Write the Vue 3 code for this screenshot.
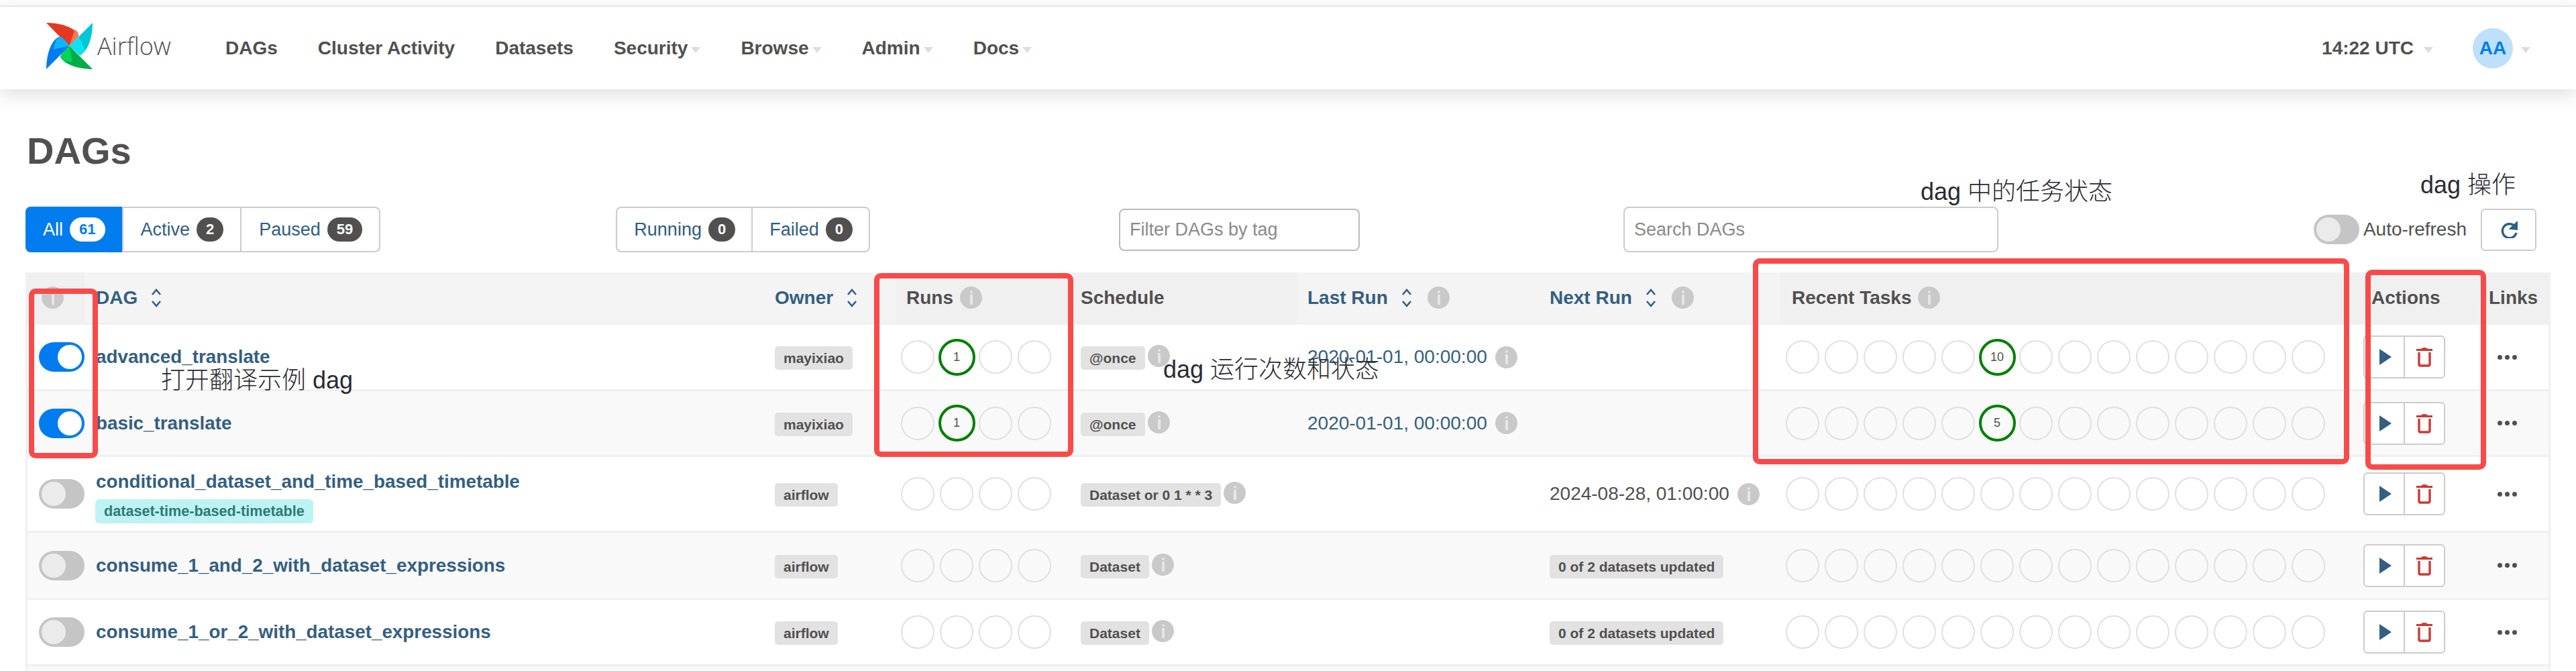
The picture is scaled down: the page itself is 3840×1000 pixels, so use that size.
<script setup>
const navItems = [
  { label: 'DAGs' },
  { label: 'Cluster Activity' },
  { label: 'Datasets' },
  { label: 'Security', caret: true },
  { label: 'Browse', caret: true },
  { label: 'Admin', caret: true },
  { label: 'Docs', caret: true }
]

const states = [
  { label: 'All', count: 61, active: true },
  { label: 'Active', count: 2 },
  { label: 'Paused', count: 59 }
]
const runStates = [
  { label: 'Running', count: 0 },
  { label: 'Failed', count: 0 }
]

const columns = [
  { key: 'toggle', info: true, dark: true },
  { key: 'dag', label: 'DAG', sort: true, link: true },
  { key: 'owner', label: 'Owner', sort: true, link: true },
  { key: 'runs', label: 'Runs', info: true, dark: true },
  { key: 'schedule', label: 'Schedule', dark: true },
  { key: 'last', label: 'Last Run', sort: true, info: true, link: true },
  { key: 'next', label: 'Next Run', sort: true, info: true, link: true },
  { key: 'tasks', label: 'Recent Tasks', info: true, dark: true },
  { key: 'actions', label: 'Actions', dark: true },
  { key: 'links', label: 'Links', dark: true }
]

const rows = [
  { name: 'advanced_translate', on: true, owner: 'mayixiao', run: 1, schedule: '@once', last: '2020-01-01, 00:00:00', taskIndex: 5, taskCount: 10, h: 99 },
  { name: 'basic_translate', on: true, owner: 'mayixiao', run: 1, schedule: '@once', last: '2020-01-01, 00:00:00', taskIndex: 5, taskCount: 5, h: 98 },
  { name: 'conditional_dataset_and_time_based_timetable', tag: 'dataset-time-based-timetable', owner: 'airflow', schedule: 'Dataset or 0 1 * * 3', next: '2024-08-28, 01:00:00', h: 113 },
  { name: 'consume_1_and_2_with_dataset_expressions', owner: 'airflow', schedule: 'Dataset', nextBadge: '0 of 2 datasets updated', h: 100 },
  { name: 'consume_1_or_2_with_dataset_expressions', owner: 'airflow', schedule: 'Dataset', nextBadge: '0 of 2 datasets updated', h: 99 },
  { h: 60 }
]
</script>

<template>
  <div class="page">
    <header class="navbar">
      <div class="brand">
        <svg class="logo" viewBox="0 0 72 72">
          <path d="M1 1C16 1 42 5 50 20L35 36Z" fill="#e43921" />
          <path d="M44 11C48 14 50 17 50 21L36 36Z" fill="#ff7557" />
          <path d="M71 1C71 16 67 42 52 50L36 36Z" fill="#00c7d4" />
          <path d="M50 21L36 36L52 51L60 43Z" fill="#11e1ee" />
          <path d="M71 71C56 71 30 67 22 52L36 36Z" fill="#00ad46" />
          <path d="M22 52C24 47 30 41 36 36L40 60C32 60 26 57 22 52Z" fill="#04d659" />
          <path d="M1 71C1 56 5 30 20 22L36 36Z" fill="#017cee" />
          <path d="M20 22C25 22 31 28 36 36L12 41C13 33 16 26 20 22Z" fill="#0cb6ff" />
        </svg>
        <span class="brand-name">Airflow</span>
      </div>
      <nav class="nav-links">
        <a v-for="item in navItems" :key="item.label" class="nav-link">
          {{ item.label }}<i v-if="item.caret" class="caret"></i>
        </a>
      </nav>
      <div class="nav-right">
        <span class="clock">14:22 UTC<i class="caret"></i></span>
        <span class="avatar">AA</span>
        <i class="caret"></i>
      </div>
    </header>

    <main class="content">
      <h1 class="title">DAGs</h1>

      <div class="toolbar">
        <div class="btn-group">
          <a v-for="s in states" :key="s.label" class="filter-btn" :class="{ active: s.active }">
            {{ s.label }}<span class="pill">{{ s.count }}</span>
          </a>
        </div>
        <div class="btn-group runs-group">
          <a v-for="s in runStates" :key="s.label" class="filter-btn">
            {{ s.label }}<span class="pill">{{ s.count }}</span>
          </a>
        </div>
        <input class="field tag-field" placeholder="Filter DAGs by tag" />
        <input class="field search-field" placeholder="Search DAGs" />
        <div class="refresh-box">
          <span class="switch"><i></i></span>
          <span class="refresh-label">Auto-refresh</span>
          <button class="refresh-btn">
            <svg viewBox="0 0 26 26" width="26" height="26">
              <path d="M21 7.5A10.5 10.5 0 1 0 24 18" fill="none" stroke="#2f5d84" stroke-width="3.4" />
              <path d="M26 0V14L12.5 12.5Z" fill="#2f5d84" />
            </svg>
          </button>
        </div>
      </div>

      <section class="dag-table">
        <div class="row head">
          <div v-for="c in columns" :key="c.key" class="cell" :class="[c.key, { dark: c.dark, link: c.link }]">
            <span class="head-label">{{ c.label }}</span>
            <svg v-if="c.sort" class="sort" viewBox="0 0 16 28" width="16" height="28">
              <path d="M2 9L8 2L14 9M2 19L8 26L14 19" fill="none" stroke="currentColor" stroke-width="2.6" />
            </svg>
            <span v-if="c.info" class="info"></span>
          </div>
        </div>

        <div v-for="(r, i) in rows" :key="i" class="row" :class="{ striped: i % 2 === 1 }" :style="{ height: r.h + 'px' }">
          <template v-if="r.name">
            <div class="cell toggle">
              <span class="switch" :class="{ on: r.on }"><i></i></span>
            </div>
            <div class="cell dag stack" :class="{ tagged: r.tag }">
              <a class="dag-name">{{ r.name }}</a>
              <span v-if="r.tag" class="tag">{{ r.tag }}</span>
            </div>
            <div class="cell owner"><span class="badge">{{ r.owner }}</span></div>
            <div class="cell runs circles">
              <span v-for="n in 4" :key="n" class="circle" :class="{ success: r.run && n === 2 }">
                {{ r.run && n === 2 ? r.run : '' }}
              </span>
            </div>
            <div class="cell schedule">
              <span class="badge">{{ r.schedule }}</span><span class="info"></span>
            </div>
            <div class="cell last">
              <template v-if="r.last"><a class="date link-text">{{ r.last }}</a><span class="info date-info"></span></template>
            </div>
            <div class="cell next">
              <template v-if="r.next"><span class="date">{{ r.next }}</span><span class="info date-info"></span></template>
              <span v-if="r.nextBadge" class="badge">{{ r.nextBadge }}</span>
            </div>
            <div class="cell tasks circles">
              <span v-for="n in 14" :key="n" class="circle" :class="{ success: r.taskCount && n === r.taskIndex + 1 }">
                {{ r.taskCount && n === r.taskIndex + 1 ? r.taskCount : '' }}
              </span>
            </div>
            <div class="cell actions">
              <div class="action-group">
                <button class="action-btn play"><i></i></button>
                <button class="action-btn">
                  <svg viewBox="0 0 24 30" width="24" height="30">
                    <path d="M8 3.5C8 1.5 16 1.5 16 3.5" fill="none" stroke="#cb3a33" stroke-width="2" />
                    <path d="M0 3H24V6H0Z" fill="#cb3a33" />
                    <path d="M4 8V26Q4 28 6 28H18Q20 28 20 26V8" fill="none" stroke="#cb3a33" stroke-width="3.4" />
                  </svg>
                </button>
              </div>
            </div>
            <div class="cell links">
              <span class="dots"><i></i><i></i><i></i></span>
            </div>
          </template>
        </div>
      </section>
    </main>

    <!-- annotations drawn over the screenshot -->
    <div class="mark mark-toggle"></div>
    <div class="mark mark-runs"></div>
    <div class="mark mark-tasks"></div>
    <div class="mark mark-actions"></div>
    <span class="note note-toggle">打开翻译示例 dag</span>
    <span class="note note-runs">dag 运行次数和状态</span>
    <span class="note note-tasks">dag 中的任务状态</span>
    <span class="note note-actions">dag 操作</span>
  </div>
</template>

<style>
html, body {
  margin: 0;
  background: #fff;
}
</style>

<style scoped>
.page {
  position: relative;
  width: 3840px;
  height: 1000px;
  overflow: hidden;
  font-family: "Liberation Sans", "Noto Sans CJK SC", sans-serif;
  color: #51504f;
}

.navbar {
  display: flex;
  align-items: center;
  height: 125px;
  margin-top: 8px;
  box-sizing: border-box;
  border-top: 2px solid #e6e6e6;
  box-shadow: 0 8px 26px rgba(0, 0, 0, 0.13);
  background: #fff;
}
.brand {
  display: flex;
  align-items: center;
  gap: 6px;
  width: 336px;
  padding-left: 68px;
  box-sizing: border-box;
  flex: none;
}
.logo {
  width: 71px;
  height: 71px;
  margin-top: -6px;
  flex: none;
}
.brand-name {
  font-family: "Open Sans", "Liberation Sans", sans-serif;
  font-size: 36px;
  font-weight: 300;
  color: #51504f;
  margin-top: -6px;
}
.nav-links {
  display: flex;
  gap: 60px;
  font-size: 28px;
  font-weight: 700;
}
.nav-link {
  display: flex;
  align-items: center;
}
.caret {
  display: inline-block;
  margin-left: 5px;
  margin-top: 6px;
  border-left: 7.5px solid transparent;
  border-right: 7.5px solid transparent;
  border-top: 9px solid #e2d9e3;
}
.nav-right {
  display: flex;
  align-items: center;
  margin-left: auto;
  margin-right: 68px;
  font-size: 28px;
  font-weight: 700;
}
.clock {
  display: flex;
  align-items: center;
}
.clock .caret {
  margin-left: 15px;
}
.avatar {
  display: flex;
  align-items: center;
  justify-content: center;
  width: 60px;
  height: 60px;
  margin-left: 59px;
  border-radius: 50%;
  background: #bfe0fa;
  color: #017cee;
}
.nav-right > .caret {
  margin-left: 12px;
}

.content {
  padding: 0 38px;
}
.title {
  margin: 60px 0 0 2px;
  font-size: 56px;
  line-height: 64px;
  font-weight: 700;
}

.toolbar {
  display: flex;
  align-items: center;
  margin-top: 51px;
  height: 68px;
}
.btn-group {
  display: flex;
  height: 68px;
  box-sizing: border-box;
  border: 2px solid #ccc;
  border-radius: 8px;
  flex: none;
}
.runs-group {
  margin-left: 351px;
}
.filter-btn {
  display: flex;
  align-items: center;
  gap: 10px;
  padding: 0 25px 0 26px;
  font-size: 27px;
  color: #2f5d84;
  border-left: 2px solid #ccc;
}
.filter-btn:first-child {
  border-left: none;
}
.runs-group .filter-btn {
  padding: 0 24px 0 25px;
}
.filter-btn.active {
  margin: -2px 0 -2px -2px;
  padding-left: 26px;
  background: #017cee;
  color: #fff;
  border-radius: 8px 0 0 8px;
}
.pill {
  display: flex;
  align-items: center;
  justify-content: center;
  min-width: 40px;
  height: 36px;
  padding: 0 14px;
  box-sizing: border-box;
  border-radius: 18px;
  background: #51504f;
  color: #fff;
  font-size: 22px;
  font-weight: 700;
}
.filter-btn.active .pill {
  background: #fff;
  color: #017cee;
}
.field {
  box-sizing: border-box;
  border: 2px solid #bbb;
  border-radius: 8px;
  background: #fff;
  font-family: inherit;
  font-size: 27px;
  padding: 0 14px;
  outline: none;
  flex: none;
}
.field::placeholder {
  color: #8a8a8a;
  opacity: 1;
}
.tag-field {
  width: 359px;
  height: 63px;
  margin-left: 371px;
}
.search-field {
  width: 559px;
  height: 68px;
  margin-left: 393px;
  border-color: #ccc;
}
.refresh-box {
  display: flex;
  align-items: center;
  margin-left: auto;
  margin-right: 21px;
}
.refresh-label {
  margin-left: 6px;
  font-size: 28px;
}
.refresh-btn {
  display: flex;
  align-items: center;
  justify-content: center;
  width: 83px;
  height: 63px;
  margin-left: 21px;
  padding: 0;
  box-sizing: border-box;
  border: 2px solid #ccc;
  border-radius: 6px;
  background: #fff;
}

.switch {
  display: inline-flex;
  align-items: center;
  width: 68px;
  height: 44px;
  padding: 0 4px;
  box-sizing: border-box;
  border-radius: 22px;
  background: #c5c5c5;
  flex: none;
}
.switch i {
  width: 36px;
  height: 36px;
  border-radius: 50%;
  background: #ebebeb;
}
.switch.on {
  justify-content: flex-end;
  background: #017cee;
}
.switch.on i {
  background: #fff;
}

.dag-table {
  margin-top: 30px;
  width: 3764px;
  box-sizing: border-box;
  border-left: 3px solid #f0f0f0;
  border-right: 3px solid #f0f0f0;
}
.row {
  display: grid;
  grid-template-columns: 85px 1029px 180px 261px 338px 361px 359px 866px 180px 99px;
  box-sizing: border-box;
  border-bottom: 3px solid #f0f0f0;
}
.row.striped {
  background: #f9f9f9;
}
.row.head {
  height: 78px;
  margin: 0 -3px;
  grid-template-columns: 88px 1029px 180px 261px 338px 361px 359px 866px 180px 102px;
  background: #f4f4f4;
  font-size: 28px;
  font-weight: 700;
}
.cell {
  display: flex;
  align-items: center;
  min-width: 0;
  box-sizing: border-box;
}
.head .cell.dark {
  background: #f0f0f0;
}
.head .cell.link {
  color: #345f82;
}
.head-label {
  white-space: nowrap;
}
.head .toggle {
  padding-left: 24px;
}
.head .dag {
  padding-left: 17px;
}
.head .runs {
  padding-left: 16px;
  gap: 10px;
}
.head .schedule,
.head .last,
.head .next {
  padding-left: 15px;
}
.head .tasks {
  padding-left: 17px;
  gap: 10px;
}
.head .actions {
  padding-left: 15px;
}
.head .links {
  padding-left: 10px;
}
.sort {
  margin-left: 20px;
  flex: none;
}
.head .last .info,
.head .next .info {
  margin-left: 23px;
}

.info {
  position: relative;
  display: inline-block;
  width: 33px;
  height: 33px;
  border-radius: 50%;
  background: #c9c9c9;
  flex: none;
}
.info::before {
  content: "";
  position: absolute;
  left: 15px;
  top: 6px;
  width: 4px;
  height: 4px;
  background: #e6e6e6;
  border-radius: 50%;
}
.info::after {
  content: "";
  position: absolute;
  left: 15px;
  top: 12px;
  width: 4px;
  height: 15px;
  background: #e6e6e6;
}

.toggle {
  padding-left: 17px;
}
.dag {
  padding-left: 17px;
}
.stack {
  flex-direction: column;
  align-items: flex-start;
  justify-content: center;
  gap: 10px;
}
.stack.tagged {
  padding-top: 10px;
}
.dag-name {
  font-size: 27.8px;
  font-weight: 700;
  color: #345f82;
  white-space: nowrap;
}
.tag {
  padding: 0 13px;
  margin-left: -1px;
  height: 36px;
  line-height: 36px;
  border-radius: 6px;
  background: #bef3f3;
  color: #2c7a78;
  font-size: 21.6px;
  font-weight: 700;
}
.badge {
  display: inline-block;
  padding: 0 13px;
  height: 35px;
  line-height: 35px;
  margin-top: 3px;
  border-radius: 5px;
  background: #e2e2e2;
  font-size: 21px;
  font-weight: 700;
  white-space: nowrap;
}
.schedule .info {
  margin-left: 4px;
  margin-top: -3px;
}
.schedule,
.last,
.next {
  padding-left: 15px;
}
.date {
  font-size: 28px;
  white-space: nowrap;
}
.link-text {
  color: #345f82;
}
.date-info {
  margin-left: 12px;
}

.circles {
  gap: 8px;
  padding-left: 8px;
}
.circle {
  display: flex;
  align-items: center;
  justify-content: center;
  width: 50px;
  height: 50px;
  box-sizing: border-box;
  border: 2px solid #e0e0e0;
  border-radius: 50%;
  font-size: 18px;
  flex: none;
}
.circle.success {
  width: 55px;
  height: 55px;
  margin: -2.5px;
  border: 4px solid #008000;
}

.actions {
  padding-left: 3px;
}
.action-group {
  display: flex;
  width: 122px;
  height: 64px;
  box-sizing: border-box;
  border: 2px solid #ccc;
  border-radius: 6px;
  background: #fff;
}
.action-btn {
  display: flex;
  align-items: center;
  justify-content: center;
  flex: 1;
  padding: 0;
  border: none;
  background: none;
}
.action-btn.play {
  flex: none;
  width: 60px;
  border-right: 2px solid #ccc;
}
.action-btn.play i {
  margin-left: 4px;
  border-top: 12px solid transparent;
  border-bottom: 12px solid transparent;
  border-left: 18px solid #345f82;
}
.links {
  padding-left: 23px;
}
.dots {
  display: flex;
  gap: 4px;
}
.dots i {
  width: 7px;
  height: 7px;
  border-radius: 50%;
  background: #51504f;
}

.mark {
  position: absolute;
  box-sizing: border-box;
  border: 8px solid #f94a4a;
  border-radius: 10px;
}
.mark-toggle {
  left: 43px;
  top: 430px;
  width: 103px;
  height: 253px;
}
.mark-runs {
  left: 1303px;
  top: 407px;
  width: 297px;
  height: 274px;
}
.mark-tasks {
  left: 2613px;
  top: 385px;
  width: 889px;
  height: 307px;
}
.mark-actions {
  left: 3526px;
  top: 402px;
  width: 180px;
  height: 298px;
}
.note {
  position: absolute;
  font-size: 36px;
  font-weight: 300;
  line-height: 40px;
  color: #2b2b33;
  white-space: nowrap;
}
.note-toggle {
  left: 240px;
  top: 547px;
}
.note-runs {
  left: 1734px;
  top: 531px;
}
.note-tasks {
  left: 2863px;
  top: 266px;
}
.note-actions {
  left: 3608px;
  top: 256px;
}
</style>
